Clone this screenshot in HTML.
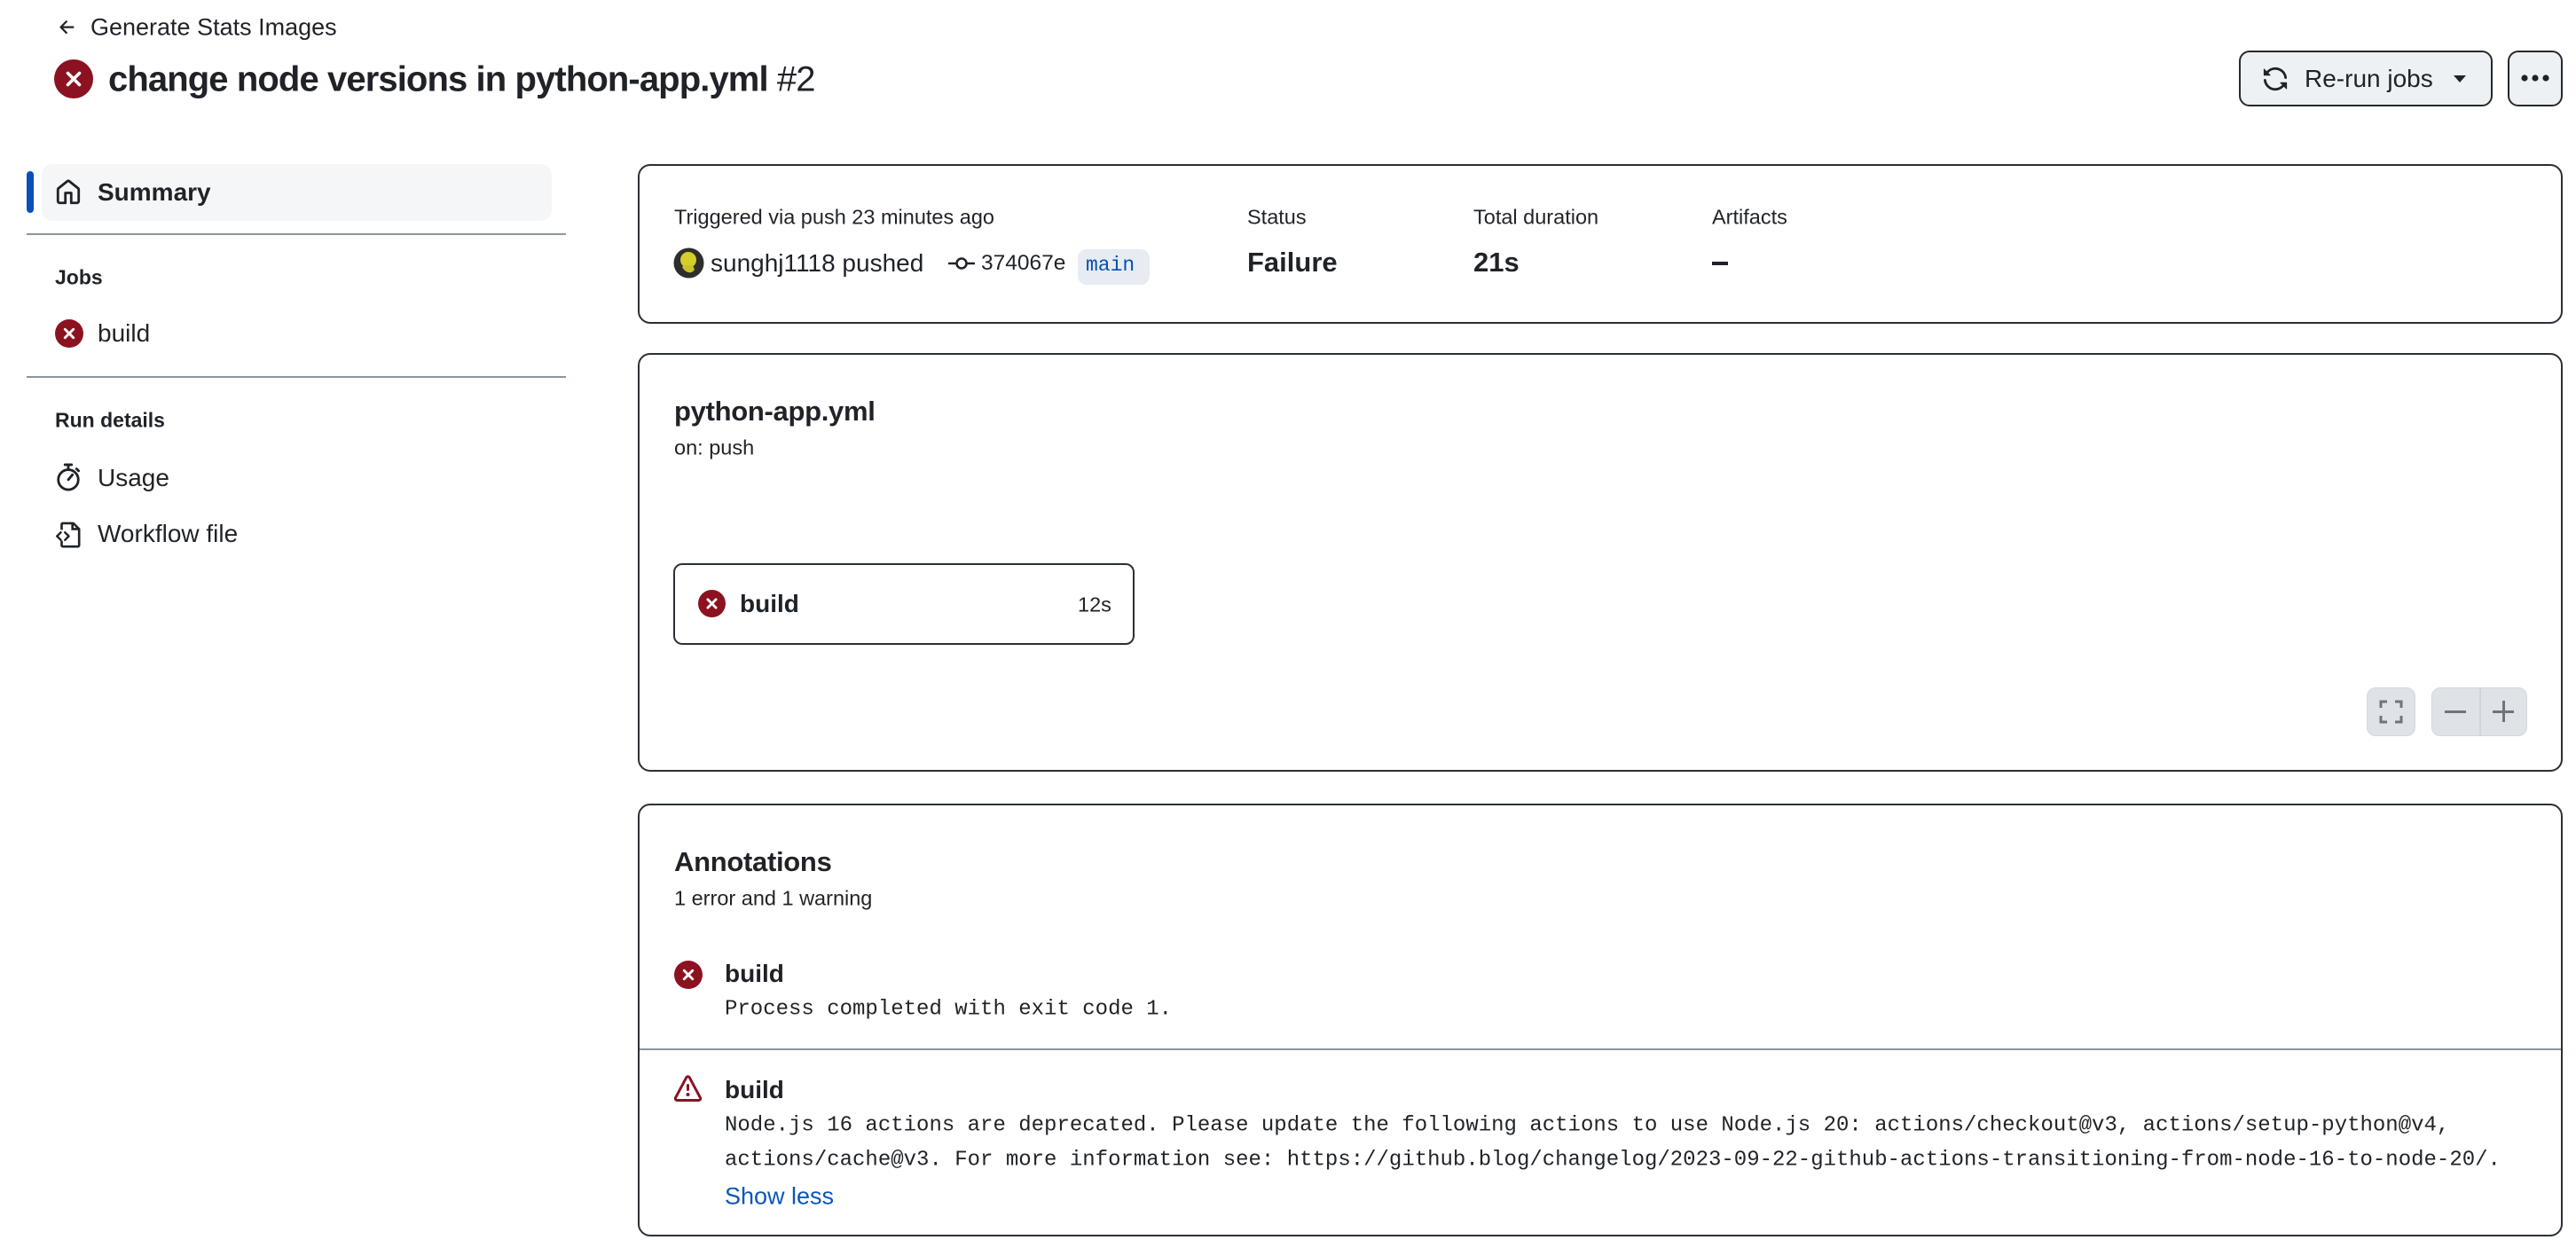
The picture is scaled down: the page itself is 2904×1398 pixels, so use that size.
<!DOCTYPE html>
<html><head><meta charset="utf-8"><style>
*{margin:0;padding:0;box-sizing:border-box}
body{width:2904px;height:1398px;background:#fff;position:relative;overflow:hidden;font-family:"Liberation Sans",sans-serif;color:#1f2328}
.a{position:absolute;white-space:nowrap}
.card{position:absolute;left:719px;width:2170px;border:2px solid #2b3036;border-radius:14px}
.mono{font-family:"Liberation Mono",monospace;font-size:24px}
.vc{transform:translateY(-50%)}
</style></head><body>

<svg class="a" style="left:64px;top:19px" width="24" height="24" viewBox="0 0 16 16"><path d="M7.78 12.53a.75.75 0 0 1-1.06 0L2.47 8.28a.75.75 0 0 1 0-1.06l4.25-4.25a.75.75 0 0 1 1.06 1.06L4.81 7h7.44a.75.75 0 0 1 0 1.5H4.81l2.97 2.97a.75.75 0 0 1 0 1.06Z" fill="#1f2328"/></svg>
<div class="a vc" style="left:102px;top:31px;font-size:27px">Generate Stats Images</div>

<svg class="a" style="left:61px;top:67px" width="44" height="44" viewBox="0 0 44 44"><circle cx="22" cy="22" r="22" fill="#8c1221"/><path d="M15.5 15.5l13 13M28.5 15.5l-13 13" stroke="#fff" stroke-width="3.6" stroke-linecap="round"/></svg>
<div class="a vc" style="left:122px;top:90px;font-size:40px;font-weight:bold;letter-spacing:-0.9px">change node versions in python-app.yml <span style="font-weight:normal">#2</span></div>

<div class="a" style="left:2524px;top:57px;width:286px;height:63px;border:2px solid #25292e;border-radius:12px;background:#eef1f4"></div>
<svg class="a" style="left:2550px;top:74px" width="30" height="30" viewBox="0 0 16 16"><path d="M1.705 8.005a.75.75 0 0 1 .834.656 5.5 5.5 0 0 0 9.592 2.97l-1.204-1.204a.25.25 0 0 1 .177-.427h3.646a.25.25 0 0 1 .25.25v3.646a.25.25 0 0 1-.427.177l-1.38-1.380A7.002 7.002 0 0 1 1.05 8.84a.75.75 0 0 1 .656-.834ZM8 2.5a5.487 5.487 0 0 0-4.131 1.869l1.204 1.204A.25.25 0 0 1 4.896 6H1.25A.25.25 0 0 1 1 5.75V2.104a.25.25 0 0 1 .427-.177l1.38 1.38A7.002 7.002 0 0 1 14.95 7.16a.75.75 0 0 1-1.49.178A5.5 5.5 0 0 0 8 2.5Z" fill="#1f2328"/></svg>
<div class="a vc" style="left:2598px;top:89px;font-size:28px">Re-run jobs</div>
<svg class="a" style="left:2765px;top:84px" width="16" height="10" viewBox="0 0 16 10"><path d="M1 1h14L8 9z" fill="#1f2328"/></svg>
<div class="a" style="left:2827px;top:57px;width:62px;height:63px;border:2px solid #25292e;border-radius:12px;background:#eef1f4"></div>
<svg class="a" style="left:2840px;top:82px" width="36" height="12"><circle cx="6" cy="6" r="3.6" fill="#1f2328"/><circle cx="18" cy="6" r="3.6" fill="#1f2328"/><circle cx="30" cy="6" r="3.6" fill="#1f2328"/></svg>

<div class="a" style="left:47px;top:185px;width:575px;height:64px;background:#f4f6f8;border-radius:12px"></div>
<div class="a" style="left:30px;top:193px;width:8px;height:47px;background:#0b4fb8;border-radius:4px"></div>
<svg class="a" style="left:62px;top:202px" width="30" height="30" viewBox="0 0 16 16"><path d="M6.906.664a1.749 1.749 0 0 1 2.187 0l5.25 4.2c.415.332.657.835.657 1.367v7.019A1.75 1.75 0 0 1 13.25 15h-3.5a.75.75 0 0 1-.75-.75V9H7v5.25a.75.75 0 0 1-.75.75h-3.5A1.75 1.75 0 0 1 1 13.25V6.23c0-.531.242-1.034.657-1.366l5.25-4.2Zm1.25 1.171a.25.25 0 0 0-.312 0l-5.25 4.2a.25.25 0 0 0-.094.196v7.019c0 .138.112.25.25.25H5.5V8.25a.75.75 0 0 1 .75-.75h3.5a.75.75 0 0 1 .75.75v5.25h2.75a.25.25 0 0 0 .25-.25V6.23a.25.25 0 0 0-.094-.195Z" fill="#1f2328"/></svg>
<div class="a vc" style="left:110px;top:217px;font-size:28px;font-weight:bold">Summary</div>
<div class="a" style="left:30px;top:263px;width:608px;height:2px;background:#8c959f"></div>
<div class="a vc" style="left:62px;top:313px;font-size:23px;font-weight:bold">Jobs</div>
<svg class="a" style="left:62px;top:360px" width="32" height="32" viewBox="0 0 44 44"><circle cx="22" cy="22" r="22" fill="#8c1221"/><path d="M15.5 15.5l13 13M28.5 15.5l-13 13" stroke="#fff" stroke-width="4" stroke-linecap="round"/></svg>
<div class="a vc" style="left:110px;top:376px;font-size:28px">build</div>
<div class="a" style="left:30px;top:424px;width:608px;height:2px;background:#8c959f"></div>
<div class="a vc" style="left:62px;top:474px;font-size:23px;font-weight:bold">Run details</div>
<svg class="a" style="left:62px;top:522px" width="30" height="32" viewBox="0 0 16 17"><path d="M6 1h4" stroke="#1f2328" stroke-width="1.5" stroke-linecap="round"/><path d="M8 1v2.5" stroke="#1f2328" stroke-width="1.5"/><circle cx="8" cy="10" r="6" fill="none" stroke="#1f2328" stroke-width="1.5"/><path d="M8 10l2.5-3" stroke="#1f2328" stroke-width="1.5" stroke-linecap="round"/><path d="M13 3.5l1.2 1.2" stroke="#1f2328" stroke-width="1.5" stroke-linecap="round"/></svg>
<div class="a vc" style="left:110px;top:539px;font-size:28px">Usage</div>
<svg class="a" style="left:62px;top:587px" width="30" height="32" viewBox="0 0 16 17"><path d="M4 5.5V2.2c0-.4.3-.7.7-.7h6.3l3.5 3.5v9.8c0 .4-.3.7-.7.7H4.7c-.4 0-.7-.3-.7-.7V12" fill="none" stroke="#1f2328" stroke-width="1.4" stroke-linejoin="round"/><path d="M10.5 1.5v3.5h4" fill="none" stroke="#1f2328" stroke-width="1.4"/><path d="M3.5 7L1.2 9.3l2.3 2.3M6 7l2.3 2.3L6 11.6" fill="none" stroke="#1f2328" stroke-width="1.3" stroke-linecap="round" stroke-linejoin="round"/></svg>
<div class="a vc" style="left:110px;top:602px;font-size:28px">Workflow file</div>

<div class="card" style="top:185px;height:180px"></div>
<div class="a vc" style="left:760px;top:245px;font-size:23.5px">Triggered via push 23 minutes ago</div>
<div class="a vc" style="left:1406px;top:245px;font-size:23.5px">Status</div>
<div class="a vc" style="left:1661px;top:245px;font-size:23.5px">Total duration</div>
<div class="a vc" style="left:1930px;top:245px;font-size:23.5px">Artifacts</div>
<svg class="a" style="left:759px;top:279px" width="35" height="35" viewBox="0 0 35 35"><circle cx="17.5" cy="17.5" r="17" fill="#2e2e2e"/><ellipse cx="17" cy="14" rx="9" ry="9" fill="#d6cc2a"/><path d="M10 22c3 6 10 9 14 3l-2-5H12z" fill="#c9c12a"/></svg>
<div class="a vc" style="left:801px;top:297px;font-size:28px">sunghj1118 pushed</div>
<svg class="a" style="left:1069px;top:287px" width="30" height="20" viewBox="0 0 30 20"><circle cx="15" cy="10" r="5.5" fill="none" stroke="#1f2328" stroke-width="2.6"/><path d="M1 10h8M21 10h8" stroke="#1f2328" stroke-width="2.6" stroke-linecap="round"/></svg>
<div class="a vc" style="left:1106px;top:297px;font-size:24.5px">374067e</div>
<div class="a" style="left:1215px;top:281px;width:81px;height:40px;background:#e6ecf1;border-radius:10px"></div>
<div class="a vc mono" style="left:1224px;top:299px;color:#0a4fae;font-size:23px">main</div>
<div class="a vc" style="left:1406px;top:296px;font-size:31px;font-weight:bold">Failure</div>
<div class="a vc" style="left:1661px;top:296px;font-size:31px;font-weight:bold">21s</div>
<div class="a" style="left:1930px;top:295px;width:18px;height:4px;background:#1f2328"></div>

<div class="card" style="top:398px;height:472px"></div>
<div class="a vc" style="left:760px;top:464px;font-size:31px;font-weight:bold;letter-spacing:-0.3px">python-app.yml</div>
<div class="a vc" style="left:760px;top:505px;font-size:23.5px">on: push</div>
<div class="a" style="left:759px;top:635px;width:520px;height:92px;border:2px solid #2b3036;border-radius:10px"></div>
<svg class="a" style="left:787px;top:665px" width="31" height="31" viewBox="0 0 44 44"><circle cx="22" cy="22" r="22" fill="#8c1221"/><path d="M15.5 15.5l13 13M28.5 15.5l-13 13" stroke="#fff" stroke-width="4" stroke-linecap="round"/></svg>
<div class="a vc" style="left:834px;top:681px;font-size:28px;font-weight:bold">build</div>
<div class="a vc" style="left:1215px;top:682px;font-size:23.5px">12s</div>
<div class="a" style="left:2668px;top:775px;width:55px;height:55px;background:#dfe2e7;border:1.5px solid #d3d8de;border-radius:10px"></div>
<svg class="a" style="left:2682px;top:789px" width="27" height="27" viewBox="0 0 27 27"><path d="M2 9V2h7M18 2h7v7M25 18v7h-7M9 25H2v-7" fill="none" stroke="#707479" stroke-width="3"/></svg>
<div class="a" style="left:2741px;top:775px;width:108px;height:55px;background:#dfe2e7;border:1.5px solid #d3d8de;border-radius:10px"></div>
<div class="a" style="left:2795px;top:775px;width:1.5px;height:55px;background:#d0d5db"></div>
<div class="a" style="left:2756px;top:801px;width:24px;height:2.5px;background:#707479"></div>
<div class="a" style="left:2810px;top:801px;width:24px;height:2.5px;background:#707479"></div>
<div class="a" style="left:2821px;top:790px;width:2.5px;height:24px;background:#707479"></div>

<div class="card" style="top:906px;height:488px"></div>
<div class="a vc" style="left:760px;top:972px;font-size:31px;font-weight:bold;letter-spacing:-0.3px">Annotations</div>
<div class="a vc" style="left:760px;top:1013px;font-size:23.5px">1 error and 1 warning</div>
<svg class="a" style="left:760px;top:1083px" width="32" height="32" viewBox="0 0 44 44"><circle cx="22" cy="22" r="22" fill="#8c1221"/><path d="M15.5 15.5l13 13M28.5 15.5l-13 13" stroke="#fff" stroke-width="4" stroke-linecap="round"/></svg>
<div class="a vc" style="left:817px;top:1098px;font-size:28px;font-weight:bold">build</div>
<div class="a vc mono" style="left:817px;top:1138px">Process completed with exit code 1.</div>
<div class="a" style="left:721px;top:1182px;width:2166px;height:2px;background:#8c959f"></div>
<svg class="a" style="left:759px;top:1212px" width="33" height="32" viewBox="0 0 16 16"><path d="M6.457 1.047c.659-1.234 2.427-1.234 3.086 0l6.082 11.378A1.75 1.75 0 0 1 14.082 15H1.918a1.75 1.75 0 0 1-1.543-2.575Zm1.763.707a.25.25 0 0 0-.44 0L1.698 13.132a.25.25 0 0 0 .22.368h12.164a.25.25 0 0 0 .22-.368Zm.53 3.996v2.5a.75.75 0 0 1-1.5 0v-2.5a.75.75 0 0 1 1.5 0ZM9 11a1 1 0 1 1-2 0 1 1 0 0 1 2 0Z" fill="#8c1221"/></svg>
<div class="a vc" style="left:817px;top:1229px;font-size:28px;font-weight:bold">build</div>
<div class="a vc mono" style="left:817px;top:1269px">Node.js 16 actions are deprecated. Please update the following actions to use Node.js 20: actions/checkout@v3, actions/setup-python@v4,</div>
<div class="a vc mono" style="left:817px;top:1308px">actions/cache@v3. For more information see: https://github.blog/changelog/2023-09-22-github-actions-transitioning-from-node-16-to-node-20/.</div>
<div class="a vc" style="left:817px;top:1349px;font-size:27px;color:#0b56b8">Show less</div>

</body></html>
